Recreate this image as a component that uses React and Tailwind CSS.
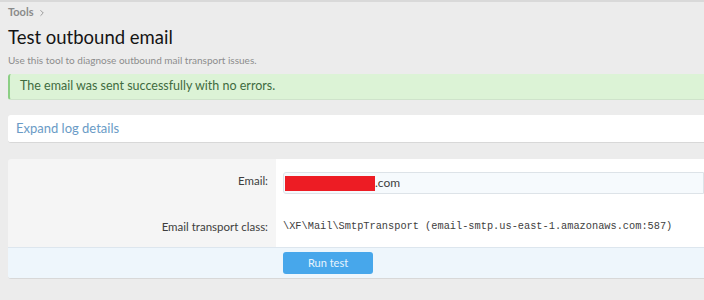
import { ChevronRight } from 'lucide-react';

const App = () => {
  return (
    <div className="min-h-[300px] bg-[#ececec] font-['Lato',sans-serif] border-t-2 border-[#d9d9d9] overflow-hidden">
      <div className="pl-2">
        {/* breadcrumb */}
        <div className="flex items-center gap-1 pt-[3px] h-[18px] text-[11px] font-bold text-[#8a8a8a]">
          <span>Tools</span>
          <ChevronRight className="w-[10px] h-[10px]" strokeWidth={2} />
        </div>

        <h1 className="mt-[4px] text-[18.5px] leading-[26px] text-[#141414]">Test outbound email</h1>
        <p className="mt-[3px] text-[10px] leading-[14px] text-[#8c8c8c]">
          Use this tool to diagnose outbound mail transport issues.
        </p>

        {/* success message */}
        <div className="mt-[7px] h-[26px] flex items-center bg-[#dcf3d6] border-l-2 border-[#8ccf85] border-b border-b-[#cfe3cb] rounded-l-[3px] pl-[10px] text-[12.5px] text-[#3f6b3f]">
          The email was sent successfully with no errors.
        </div>

        {/* expand log */}
        <div className="mt-[15px] h-[28px] flex items-center bg-white border-b border-[#d8d8d8] rounded-l-[3px] pl-[8px] text-[13px] text-[#6a9bc6]">
          Expand log details
        </div>

        {/* form */}
        <div className="mt-[16px] border-b border-[#d8d8d8] rounded-l-[3px] overflow-hidden">
          <div className="flex">
            <div className="w-[268px] bg-[#f5f5f5] flex flex-col">
              <div className="h-[37px] flex items-end justify-end pr-[8px] pb-[7px] text-[11.5px] text-[#3e3e3e]">Email:</div>
              <div className="h-[51px] flex items-center justify-end pr-[8px] pt-[11px] text-[11.5px] text-[#3e3e3e]">Email transport class:</div>
            </div>
            <div className="flex-1 bg-white flex flex-col pl-[7px]">
              <div className="h-[37px] pt-[13px]">
                <div className="h-[22px] flex items-center bg-[#f6fafd] border border-[#dde3e8] rounded-l-[3px] pl-[1px] text-[12px] text-[#3e3e3e]">
                  <span className="w-[90px] h-[15px] bg-[#ed1c24]"></span>
                  <span>.com</span>
                </div>
              </div>
              <div className="h-[51px] flex items-center pt-[11px] font-['Liberation_Mono',monospace] text-[10.3px] text-[#3e3e3e] whitespace-nowrap">
                \XF\Mail\SmtpTransport (email-smtp.us-east-1.amazonaws.com:587)
              </div>
            </div>
          </div>
          <div className="h-[31px] bg-[#eef6fc] border-t border-[#dde6ee] flex items-center pl-[275px]">
            <button className="w-[90px] h-[22px] rounded-[3px] bg-[#47a7eb] text-[11px] text-[#e8f4fd]">Run test</button>
          </div>
        </div>
      </div>
    </div>
  );
};

export default App;
